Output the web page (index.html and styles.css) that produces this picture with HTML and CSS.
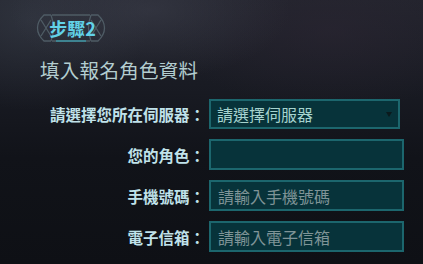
FILE: index.html
```html
<!DOCTYPE html>
<html lang="zh-Hant">
<head>
<meta charset="utf-8">
<title>填入報名角色資料</title>
<link rel="stylesheet" href="styles.css">
</head>
<body>
<main class="page">
  <div class="step">
    <svg class="step-frame" width="70" height="32" viewBox="0 0 70 32" aria-hidden="true">
      <g fill="none" stroke="#4f5c65" stroke-width="1.3">
        <path d="M16 3 H54"/>
        <path d="M16 29 H54"/>
        <path d="M15 3 L8 3 Q1.5 9 1.5 16 Q1.5 23 8 29 L15 29"/>
        <path d="M15 3 Q20 16 15 29"/>
        <path d="M5 8 L15 24 M5 24 L15 8"/>
        <path d="M55 3 L62 3 Q68.5 9 68.5 16 Q68.5 23 62 29 L55 29"/>
        <path d="M55 3 Q50 16 55 29"/>
        <path d="M65 8 L55 24 M65 24 L55 8"/>
      </g>
      <path d="M20 29 H50" stroke="#3aa7b8" stroke-width="1.2"/>
    </svg>
    <span class="step-text">步驟2</span>
  </div>
  <h1 class="title">填入報名角色資料</h1>
  <form class="form">
    <label class="label" for="server">請選擇您所在伺服器：</label>
    <div class="select-wrap">
      <select id="server" class="field select">
        <option>請選擇伺服器</option>
      </select>
    </div>
    <label class="label" for="role">您的角色：</label>
    <input id="role" class="field input" type="text">
    <label class="label" for="phone">手機號碼：</label>
    <input id="phone" class="field input" type="text" placeholder="請輸入手機號碼">
    <label class="label" for="email">電子信箱：</label>
    <input id="email" class="field input" type="text" placeholder="請輸入電子信箱">
  </form>
</main>
</body>
</html>
```
FILE: styles.css
```css
html, body {
  margin: 0;
  padding: 0;
}
body {
  width: 423px;
  height: 264px;
  overflow: hidden;
  font-family: "Noto Sans CJK TC", "Noto Sans", sans-serif;
  background:
    radial-gradient(ellipse 140px 70px at 150px 10px, rgba(70, 72, 86, 0.45), transparent),
    radial-gradient(ellipse 120px 90px at 30px 20px, rgba(60, 66, 78, 0.5), transparent),
    radial-gradient(ellipse 160px 80px at 330px 30px, rgba(45, 38, 52, 0.5), transparent),
    linear-gradient(180deg, #22242d 0%, #181a22 35%, #111319 60%, #0e1015 100%);
}
.page {
  padding: 12px 0 0 0;
}
.step {
  position: relative;
  width: 70px;
  height: 32px;
  margin-left: 36px;
  display: flex;
  align-items: center;
  justify-content: center;
}
.step-frame {
  position: absolute;
  left: 0;
  top: 0;
}
.step-text {
  position: relative;
  font-size: 18px;
  font-weight: 700;
  color: #62d2e8;
  line-height: 1;
  margin-left: 3px;
  margin-top: -1px;
}
.title {
  margin: 14px 0 0 40px;
  font-size: 19.5px;
  font-weight: 400;
  color: #b3cdd0;
  line-height: 24px;
  letter-spacing: 0.3px;
}
.form {
  margin-top: 17px;
  display: grid;
  grid-template-columns: 205px auto;
  column-gap: 4px;
  row-gap: 10px;
  align-items: center;
  justify-items: start;
}
.label {
  justify-self: end;
  font-size: 15.5px;
  font-weight: 700;
  color: #c0e2ea;
  line-height: 20px;
}
.field {
  box-sizing: border-box;
  margin: 0;
  background: #07333a;
  border: 2px solid #1c666d;
  border-radius: 0;
  font-family: inherit;
  font-size: 16px;
  outline: none;
}
.select-wrap {
  position: relative;
}
.select-wrap::after {
  content: "";
  position: absolute;
  right: 8px;
  top: 13px;
  border-left: 3px solid transparent;
  border-right: 3px solid transparent;
  border-top: 5px solid #0b1a1d;
}
.select {
  appearance: none;
  -webkit-appearance: none;
  width: 191px;
  height: 30px;
  padding: 0 0 0 6px;
  color: #a6d3cf;
}
.input {
  width: 195px;
  height: 31px;
  padding: 0 0 0 7px;
  color: #a6d3cf;
}
.input::placeholder {
  color: #7f9497;
}
```
